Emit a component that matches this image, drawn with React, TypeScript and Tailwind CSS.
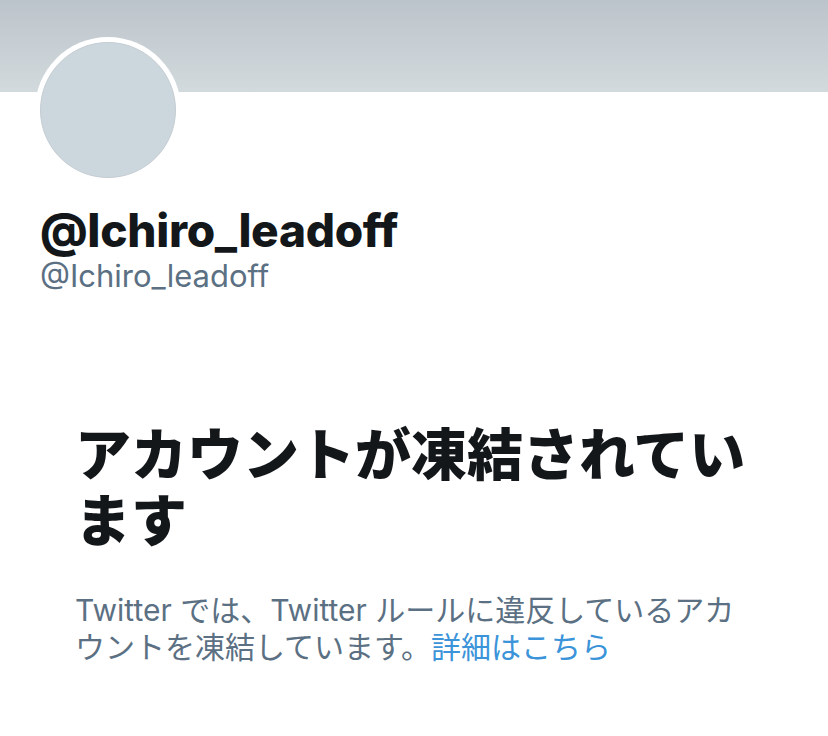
const latin = "font-['Inter','Noto_Sans_CJK_JP',sans-serif]";

export default function App() {
  return (
    <div className={`min-h-[736px] w-[828px] bg-white ${latin}`}>
      {/* Banner */}
      <div className="h-[92px] bg-gradient-to-b from-[#bcc4cb] to-[#d3dadd]" />

      {/* Avatar + names */}
      <div className="px-[35px]">
        <div className="-mt-[55px] h-[146px] w-[146px] rounded-full bg-white p-[5px]">
          <div className="h-full w-full rounded-full border border-[#c4cdd3] bg-[#ccd6dd]" />
        </div>
      </div>

      <div className="mt-[21px] px-[40px]">
        <div className="text-[46px] font-extrabold leading-[52px] tracking-[-0.3px] text-[#14171a]">
          @Ichiro_leadoff
        </div>
        <div className="mt-[2px] text-[31px] leading-[36px] text-[#5b7083]">
          @Ichiro_leadoff
        </div>
      </div>

      {/* Suspended notice */}
      <div className="mt-[128px] px-[75px]">
        <h1 className="text-[56px] font-black leading-[66px] text-[#14171a]">
          アカウントが凍結されています
        </h1>
        <p className="mt-[38px] text-[30px] leading-[37px] text-[#5b7083]">
          Twitter では、Twitter ルールに違反しているアカウントを凍結しています。
          <span className="text-[#3b94d9]">詳細はこちら</span>
        </p>
      </div>
    </div>
  );
}
